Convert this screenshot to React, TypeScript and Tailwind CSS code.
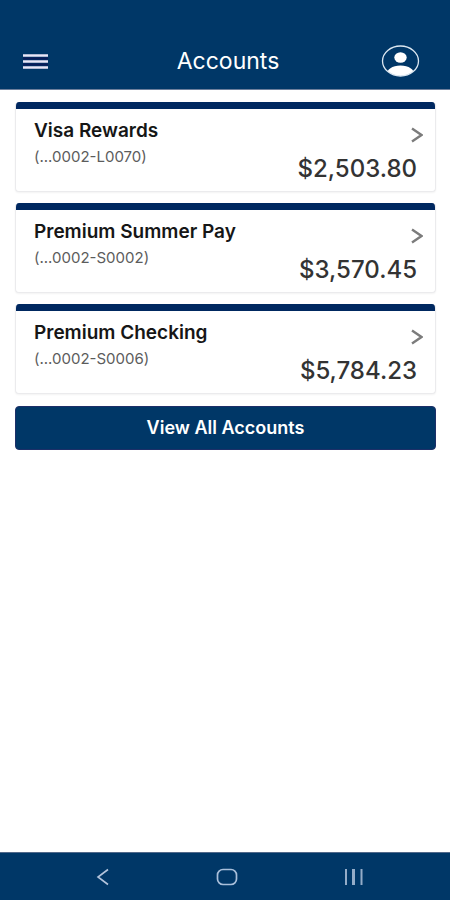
const accounts = [
  { name: "Visa Rewards", number: "(...0002-L0070)", balance: "$2,503.80" },
  { name: "Premium Summer Pay", number: "(...0002-S0002)", balance: "$3,570.45" },
  { name: "Premium Checking", number: "(...0002-S0006)", balance: "$5,784.23" },
];

type Account = (typeof accounts)[number];

function Header() {
  return (
    <header className="flex h-[90px] items-end justify-between border-b border-[#6d7f9c] bg-[#003767] pr-[30px] pb-3 pl-[23px] text-white">
      <button type="button" aria-label="Menu" className="flex h-8 w-[52px] items-center">
        <svg width="25" height="15" viewBox="0 0 25 15" fill="none">
          <path d="M0 4.500h25M0 10.500h25" stroke="#0b1a58" strokeWidth="2" />
          <path d="M0 1.500h25M0 7.500h25M0 13.500h25" stroke="#e9e6f7" strokeWidth="2.600" />
        </svg>
      </button>
      <h1 className="text-[23px] leading-8">Accounts</h1>
      <button type="button" aria-label="Profile">
        <svg width="39" height="32" viewBox="0 0 39 32">
          <clipPath id="avatar">
            <ellipse cx="19.500" cy="16" rx="18" ry="15" />
          </clipPath>
          <g clipPath="url(#avatar)" fill="white">
            <ellipse cx="19.500" cy="12.500" rx="6.200" ry="5.200" />
            <path d="M5 31c1-7 6-10.500 14.500-10.500S33 24 34 31z" />
          </g>
          <ellipse cx="19.500" cy="16" rx="18" ry="15" fill="none" stroke="#dbe7f1" strokeWidth="1.300" />
        </svg>
      </button>
    </header>
  );
}

function AccountCard({ account }: { account: Account }) {
  return (
    <li>
      <button
        type="button"
        className="block w-full overflow-hidden rounded border border-t-0 border-[#ebebed] bg-white text-left shadow-xs"
      >
        <span className="block h-[7px] bg-[#002860]" />
        <span className="flex h-[82px] justify-between pr-3 pl-[18px]">
          <span className="flex flex-col pt-2.5">
            <span className="text-[19px] leading-6 font-semibold text-[#161616]">{account.name}</span>
            <span className="mt-0.5 text-[15px] leading-6 text-[#5c5c5c]">{account.number}</span>
          </span>
          <span className="flex flex-col items-end pt-[18px]">
            <svg width="12" height="16" viewBox="0 0 12 16" fill="none" stroke="#7c7c7c" strokeWidth="2.400">
              <path d="M1 1.500L10.500 8L1 14.500" />
            </svg>
            <span className="mt-2.5 pr-1.5 text-2xl leading-8 font-medium text-[#333]">
              {account.balance}
            </span>
          </span>
        </span>
      </button>
    </li>
  );
}

function SystemBar() {
  return (
    <nav
      aria-label="System"
      className="flex h-12 items-center justify-around border-t border-[#52698a] bg-[#003767] pr-[33px] pl-[43px]"
    >
      <button type="button" aria-label="Back" className="p-2">
        <svg width="14" height="18" viewBox="0 0 14 18" fill="none" stroke="#b3c4dc" strokeWidth="1.600">
          <path d="M12 1.500L2 9l10 7.500" />
        </svg>
      </button>
      <button type="button" aria-label="Home" className="p-2">
        <svg width="22" height="18" viewBox="0 0 22 18" fill="none" stroke="#a9bfda" strokeWidth="1.700">
          <rect x="1.500" y="1.500" width="19" height="15" rx="5.500" />
        </svg>
      </button>
      <button type="button" aria-label="Recent apps" className="p-2">
        <svg width="20" height="18" viewBox="0 0 20 18" fill="none" stroke="#94acc8" strokeWidth="2">
          <path d="M2 1v16M17.500 1v16" />
          <path d="M9.500 1v16" strokeWidth="3" />
        </svg>
      </button>
    </nav>
  );
}

export default function App() {
  return (
    <div className="flex min-h-screen flex-col bg-white font-['Inter',sans-serif]">
      <Header />
      <main className="flex-1 pt-3 pr-3.5 pl-[15px]">
        <ul className="flex flex-col gap-[11px]">
          {accounts.map((account) => (
            <AccountCard key={account.number} account={account} />
          ))}
        </ul>
        <button
          type="button"
          className="mt-3 h-11 w-full rounded border border-[#1d2f68] bg-[#003767] text-lg font-semibold text-white"
        >
          View All Accounts
        </button>
      </main>
      <SystemBar />
    </div>
  );
}
